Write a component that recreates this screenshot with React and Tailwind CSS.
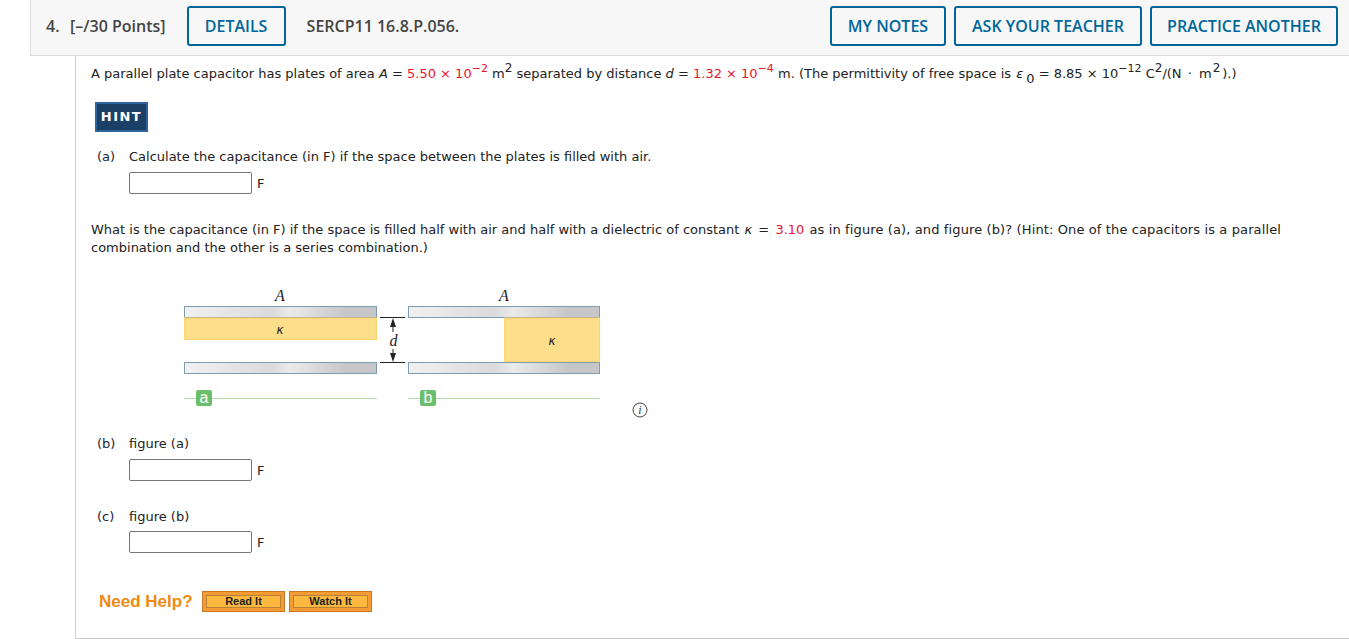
const body = '[font-family:"DejaVu_Sans",sans-serif]';

function Red({ children }) {
  return <span className="text-[#e8142b]">{children}</span>;
}

function Sup({ children }) {
  return <sup className="text-[11px] leading-none relative -top-[6px] align-baseline">{children}</sup>;
}

function Square({ className }) {
  return <sup className={`text-[12px] leading-none relative -top-[6px] align-baseline ${className}`}>2</sup>;
}

function HeaderButton({ children, className }) {
  return (
    <button className={`h-10 rounded-[3px] border-2 border-[#006699] text-[#006699] text-[16px] font-semibold flex items-center justify-center ${className}`}>
      {children}
    </button>
  );
}

function AnswerRow() {
  return (
    <div className="flex items-center ml-[38px] h-[24px]">
      <input className="w-[123px] h-[22px] border border-[#767676] rounded-[2px] bg-white" readOnly />
      <span className="ml-[5px] mt-[1px] text-[13px] text-[#222]">F</span>
    </div>
  );
}

function Part({ label, text }) {
  return (
    <div className="flex h-[18px] items-center text-[13px] text-[#222]">
      <span className="w-[32px] ml-[6px] text-[13px] text-[#1a2433]">{label}</span>
      <span>{text}</span>
    </div>
  );
}

function Plate({ x, y, w }) {
  return <rect x={x + 0.5} y={y + 0.5} width={w} height="11" fill="url(#plate)" stroke="#7f9dab" />;
}

function Figure() {
  return (
    <svg width="480" height="140" viewBox="170 285 480 140" className="block ml-[79px]">
      <defs>
        <linearGradient id="plate" x1="0" x2="1" y1="0" y2="0">
          <stop offset="0" stopColor="#f0f1f1" />
          <stop offset="0.45" stopColor="#d9dadb" />
          <stop offset="0.55" stopColor="#e9eaea" />
          <stop offset="0.85" stopColor="#c4c5c6" />
          <stop offset="1" stopColor="#c6c7c8" />
        </linearGradient>
      </defs>
      <g fontFamily="Liberation Serif, serif" fontStyle="italic" fill="#222">
        <text x="280" y="301" fontSize="16" textAnchor="middle">A</text>
        <text x="504" y="301" fontSize="16" textAnchor="middle">A</text>
        <text x="393.5" y="346" fontSize="16" textAnchor="middle">d</text>
      </g>
      <Plate x={184} y={306} w={192} />
      <rect x="184.5" y="318" width="192" height="21.5" fill="#fede8a" stroke="#fdd36c" />
      <Plate x={184} y={362} w={192} />
      <Plate x={408} y={306} w={191} />
      <rect x="504.5" y="318" width="95" height="44" fill="#fede8a" stroke="#fdd36c" />
      <Plate x={408} y={362} w={191} />
      <g fontFamily="DejaVu Sans, sans-serif" fontStyle="italic" fontSize="12" fill="#222" textAnchor="middle">
        <text x="280" y="334">κ</text>
        <text x="552" y="345">κ</text>
      </g>
      <path d="M380 317.5H405M380 362.5H405M393 324V332M393 349V357" stroke="#222" />
      <path d="M393 318L390 327H396ZM393 362L390 353H396Z" fill="#222" />
      <path d="M184 398.5H377M408 398.5H600" stroke="#b1dea7" />
      <rect x="196" y="390" width="16" height="16" rx="2" fill="#6cbf6a" />
      <rect x="420" y="390" width="16" height="16" rx="2" fill="#6cbf6a" />
      <g fontFamily="Liberation Sans, sans-serif" fontSize="16" fill="#fff" textAnchor="middle">
        <text x="204" y="403">a</text>
        <text x="428" y="403">b</text>
      </g>
      <circle cx="640" cy="410" r="7" fill="none" stroke="#444" />
      <text x="640" y="414" fontFamily="Liberation Serif, serif" fontStyle="italic" fontSize="12" fill="#333" textAnchor="middle">i</text>
    </svg>
  );
}

function HelpButton({ children, className }) {
  return (
    <button className={`w-[83px] h-[21px] bg-[#f29c33] border border-[#c9772a] p-[3px] flex ${className}`}>
      <span className="flex-1 border border-[#b9803a] bg-[#fdb93f] text-[11px] font-bold text-[#222] flex items-center justify-center leading-none">{children}</span>
    </button>
  );
}

export default function App() {
  return (
    <div className={`w-[1349px] h-[639px] overflow-hidden bg-white ${body}`}>
      <header className="ml-[30px] h-[56px] bg-[#f7f7f7] border-l border-b border-[#dddddd] flex items-start pt-[6px] pl-[15px] pr-[11px] [font-family:'Open_Sans',sans-serif] text-[#444]">
        <span className="text-[16px] font-semibold leading-10 w-[24px]">4.</span>
        <span className="text-[16px] font-semibold leading-10">[–/30 Points]</span>
        <HeaderButton className="ml-[21px] w-[99px]">DETAILS</HeaderButton>
        <span className="ml-[21px] text-[16px] font-semibold leading-10">SERCP11 16.8.P.056.</span>
        <div className="ml-auto flex gap-[8px]">
          <HeaderButton className="w-[116px]">MY NOTES</HeaderButton>
          <HeaderButton className="w-[188px]">ASK YOUR TEACHER</HeaderButton>
          <HeaderButton className="w-[188px]">PRACTICE ANOTHER</HeaderButton>
        </div>
      </header>

      <main className="ml-[75px] h-[583px] border-l border-b border-[#cccccc] pl-[15px] text-[13px] text-[#222]">
        <p className="pt-[7px] h-[46px] leading-[22px] whitespace-nowrap">
          A parallel plate capacitor has plates of area <i>A</i> = <Red>5.50 × 10<Sup>−2</Sup></Red> m<Square /> separated by distance <i>d</i> = <Red>1.32 × 10<Sup>−4</Sup></Red> m. (The permittivity of free space is <i className="ml-[1px]">ε</i><sub className="text-[13px] align-baseline relative top-[5px] ml-[3px]">0</sub> = 8.85 × 10<Sup>−12</Sup> C<Square />/(N <span className="ml-[2px] mr-[3px]">·</span> m<Square className="ml-[1px] mr-[2px]" />).)
        </p>
        <button className="block ml-[4px] w-[53px] h-[30px] bg-[#1c3f66] border-2 border-[#2d6499] text-white text-[13px] font-bold tracking-[1.5px]">
          HINT
        </button>
        <div className="mt-[16px]">
          <Part label="(a)" text="Calculate the capacitance (in F) if the space between the plates is filled with air." />
        </div>
        <div className="mt-[5px]">
          <AnswerRow />
        </div>
        <p className="mt-[26px] w-[1200px] leading-[18px]">
          What is the capacitance (in F) if the space is filled half with air and half with a dielectric of constant <i className="ml-[1px]">κ</i> <span className="mx-[2px]">=</span> <Red>3.10</Red> <span className="ml-[1px] tracking-[0.12px]">as in figure (a), and figure (b)? (Hint: One of the capacitors is a parallel</span> combination and the other is a series combination.)
        </p>
        <div className="mt-[28px]">
          <Figure />
        </div>
        <div className="mt-[10px]">
          <Part label="(b)" text="figure (a)" />
        </div>
        <div className="mt-[5px]">
          <AnswerRow />
        </div>
        <div className="mt-[26px]">
          <Part label="(c)" text="figure (b)" />
        </div>
        <div className="mt-[4px]">
          <AnswerRow />
        </div>
        <div className="mt-[35px] ml-[8px] flex items-center [font-family:'Liberation_Sans',sans-serif]">
          <span className="text-[17px] font-bold text-[#f08a12] w-[103px] whitespace-nowrap">Need Help?</span>
          <HelpButton>Read It</HelpButton>
          <HelpButton className="ml-[4px]">Watch It</HelpButton>
        </div>
      </main>
    </div>
  );
}
